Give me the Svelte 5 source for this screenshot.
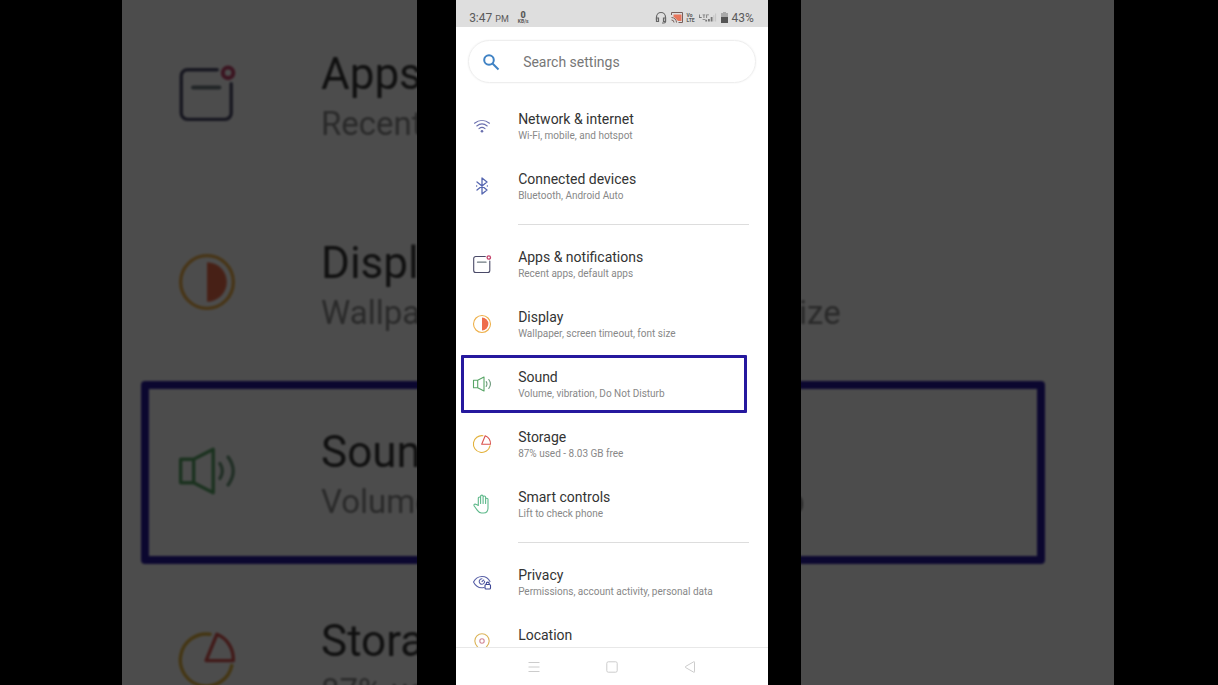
<script>
	const settings = [
		{ id: "network", title: "Network & internet", text: "Wi-Fi, mobile, and hotspot" },
		{ id: "devices", title: "Connected devices", text: "Bluetooth, Android Auto", last: true },
		{ id: "apps", title: "Apps & notifications", text: "Recent apps, default apps" },
		{ id: "display", title: "Display", text: "Wallpaper, screen timeout, font size" },
		{ id: "sound", title: "Sound", text: "Volume, vibration, Do Not Disturb", marked: true },
		{ id: "storage", title: "Storage", text: "87% used - 8.03 GB free" },
		{ id: "smart", title: "Smart controls", text: "Lift to check phone", last: true },
		{ id: "privacy", title: "Privacy", text: "Permissions, account activity, personal data" },
		{ id: "location", title: "Location", text: "On - 9 apps have access to location" },
	];

	// only the middle of the list fits behind the phone
	const enlarged = settings.slice(2, 6);

	let search = $state("");
</script>

{#snippet icon(id)}
	<svg class="icon" viewBox="0 0 20 20" fill="none" stroke-width="1.1" stroke-linecap="round" stroke-linejoin="round">
		{#if id === "network"}
			<g stroke="#6a6fae">
				<path d="M2.5 7.2c4.6-3.7 10.4-3.7 15 0" />
				<path d="M4.8 10c3.2-2.6 7.2-2.6 10.4 0" />
				<path d="M7 12.6c1.9-1.5 4.1-1.5 6 0" />
			</g>
			<circle cx="10" cy="15.2" r="1.3" fill="#6a6fae" />
		{:else if id === "devices"}
			<path stroke="#5566b0" stroke-width="1.3" d="M5 6l10 8-5 4V2l5 4-10 8" />
			<path stroke="#5566b0" stroke-width="1.3" d="M4.6 10h.1M15.3 10h.1" />
		{:else if id === "apps"}
			<path stroke="#4a4a68" d="M13.3 2.5H3.7A2 2 0 0 0 1.7 4.500v12a2 2 0 0 0 2 2h12.1a2 2 0 0 0 2-2V7" />
			<path stroke="#6d7a80" stroke-width="1.3" d="M5.5 8.2h8.5" />
			<circle cx="16.8" cy="3.5" r="1.7" stroke="#c4436b" stroke-width="1.3" />
		{:else if id === "display"}
			<circle cx="10" cy="10" r="8.5" stroke="#eeb04a" />
			<path fill="#ee6c4a" d="M10 3.6a6.400 6.400 0 0 1 0 12.8z" />
		{:else if id === "sound"}
			<path stroke="#58a566" d="M1.5 6.2h4.200v7.600H1.500zM5.700 6.200L12 3v14l-6.300-3.200" />
			<path stroke="#6d9a7c" d="M14.2 7.6c1 1.6 1 3.200 0 4.800M16.800 5.500c2.200 3 2.200 6 0 9" />
		{:else if id === "storage"}
			<path stroke="#e3b23c" d="M11 1.7A8.4 8.4 0 1 0 18 11.8" />
			<path stroke="#d9534f" d="M9.7 10.2l3.5-8.5c3.4 1.4 5.400 4.600 5.300 8.500z" />
		{:else if id === "smart"}
			<path
				stroke="#5fb98b"
				d="M6.3 11.5V4.3c0-1.7 2.300-1.700 2.300 0V2.500c0-1.800 2.500-1.800 2.500 0v.8c0-1.700 2.500-1.700 2.500 0v2c0-1.500 2.400-1.500 2.400 0V14c0 3-1.500 5-4.500 5H9.500c-2 0-3-1-4.100-2.600L2.200 12c-.8-1.500.9-2.500 2.200-1.400zM8.600 4v5.500M11.100 3v6.500M13.600 5v4.500"
			/>
		{:else if id === "privacy"}
			<path stroke="#5a62a8" d="M12 15.5C7.5 16.5 3.5 14 1.5 10 5.5 2.8 14.5 2.8 18 9.5" />
			<path stroke="#5a62a8" d="M12.6 9.2a2.7 2.7 0 1 1-2.6-2.4M10 9.5l1.8-1.5" />
			<rect x="13" y="12.5" width="5.5" height="4.5" rx="1" stroke="#3d4795" />
			<path stroke="#3d4795" d="M14.3 12.5v-1c0-1.9 2.9-1.9 2.9 0v1" />
		{:else}
			<path stroke="#dcb45a" d="M10 19.5C5.500 15.500 2.800 12.500 2.800 9a7.200 7.200 0 0 1 14.400 0c0 3.500-2.700 6.500-7.200 10.500z" />
			<circle cx="10" cy="9" r="2.2" stroke="#d08797" />
		{/if}
	</svg>
{/snippet}

{#snippet entry(item)}
	{@render icon(item.id)}
	<span class="label">
		<span class="title">{item.title}</span>
		<span class="text">{item.text}</span>
	</span>
{/snippet}

<div class="stage">
	<div class="backdrop" aria-hidden="true">
		<div class="enlarged">
			{#each enlarged as item}
				<div class="row" class:marked={item.marked}>{@render entry(item)}</div>
			{/each}
		</div>
	</div>

	<div class="band">
		<main class="phone">
			<header>
				<span class="time">3:47 <small>PM</small></span>
				<span class="speed"><b>0</b><span>KB/s</span></span>
				<span class="signals">
					<svg width="12" height="13" viewBox="0 0 12 13" fill="none" stroke="#666">
						<path stroke-width="1.2" d="M1.5 9V6a4.5 4.5 0 0 1 9 0v4.5q0 1.5-1.5 1.5H7" />
						<path stroke-width="1.2" d="M1.5 7H3.5v3.5h-2zM8.5 7h2v3.5h-2z" />
					</svg>
					<svg width="12" height="11" viewBox="0 0 12 11">
						<path fill="#e8765c" d="M2.5 2.5h8v6.5H7L2.5 4.5z" />
						<path fill="none" stroke="#77605c" d="M.5 3V.5h11v10H7.5M.5 5.5a5 5 0 0 1 5 5M.5 8a2.5 2.5 0 0 1 2.5 2.5" />
					</svg>
					<span class="tiny"><span>Vo</span><span>LTE</span></span>
					<svg width="18" height="10" viewBox="0 0 20 10" fill="#777">
						<path d="M0 1h1v3h2v1H0zM4 1h3v1H6v3H5V2H4zM8 1h3v1H9v3H8zM4 6h3v1H4zM7 7h2v2H7zM10 6h2v3h-2zM13 4h2v5h-2z" />
						<path fill="#c2c2c2" d="M16 2h1v7h-1zM18 0h1v9h-1z" />
					</svg>
					<svg width="7" height="11" viewBox="0 0 7 11">
						<path fill="#aaa" d="M2 0h3v1h2v5H0V1h2z" />
						<path fill="#555" d="M0 5h7v6H0z" />
					</svg>
					<span class="percent">43%</span>
				</span>
			</header>

			<label class="search">
				<svg width="18" height="18" viewBox="0 0 18 18" fill="none" stroke="#3f82c4" stroke-width="2">
					<circle cx="7" cy="7" r="4.8" />
					<path d="M10.5 10.5l6 6" />
				</svg>
				<input type="text" placeholder="Search settings" aria-label="Search settings" bind:value={search} />
			</label>

			<nav class="list">
				{#each settings as item}
					<a class="row" class:marked={item.marked} href="#{item.id}">{@render entry(item)}</a>
					{#if item.last}
						<hr />
					{/if}
				{/each}
			</nav>

			<footer>
				<button aria-label="Recent apps">
					<svg width="12" height="12" viewBox="0 0 12 12"><path d="M.5 1.5h11M.5 6h11M.5 10.5h11" /></svg>
				</button>
				<button aria-label="Home">
					<svg width="12" height="12" viewBox="0 0 12 12"><rect x=".8" y=".8" width="10.4" height="10.4" rx="1.5" /></svg>
				</button>
				<button aria-label="Back">
					<svg width="12" height="12" viewBox="0 0 12 12"><path d="M10.5 1.2v9.6q0 .8-.8.4L1.5 6.5q-.8-.5 0-1L9.7.8q.8-.4.8.4z" /></svg>
				</button>
			</footer>
		</main>
	</div>
</div>

<style>
	:global(body) {
		margin: 0;
		background: #000;
	}

	.stage {
		display: grid;
		grid-template: 100vh / 100%;
		overflow: hidden;
		font-family: Roboto, "Liberation Sans", sans-serif;
	}

	.backdrop,
	.band {
		grid-area: 1 / 1;
		display: grid;
		min-height: 0;
	}

	.backdrop {
		grid-template: 100% / 122fr 992fr 104fr;
	}

	.enlarged {
		grid-column: 2;
		box-sizing: border-box;
		padding-top: 3px;
		overflow: hidden;
		background: #fff;
		filter: brightness(0.3);
	}

	.band {
		z-index: 1;
		width: 31.5%;
		justify-self: center;
		grid-template: 100% / 39fr 312fr 33fr;
		background: #000;
	}

	.phone {
		grid-column: 2;
		display: flex;
		flex-direction: column;
		min-width: 0;
		background: #fff;
	}

	header {
		display: flex;
		align-items: center;
		box-sizing: border-box;
		height: 27px;
		padding: 8px 14px 0 13px;
		background: #dedede;
		color: #5a5a5a;
		font-size: 12px;
	}

	small {
		font-size: 9px;
	}

	.speed {
		display: flex;
		flex-direction: column;
		align-items: center;
		margin-left: 9px;
		font-size: 5px;
		line-height: 5px;
		font-weight: bold;
	}

	.speed b {
		font-size: 9px;
		line-height: 8px;
	}

	.signals {
		display: flex;
		align-items: center;
		gap: 4px;
		margin-left: auto;
	}

	.tiny {
		display: flex;
		flex-direction: column;
		font-size: 5px;
		line-height: 5px;
		font-weight: bold;
	}

	.search {
		display: flex;
		align-items: center;
		gap: 23px;
		margin: 13px 12px 14px 12px;
		padding: 0 13px;
		height: 41px;
		border: 1px solid #eee;
		border-radius: 22px;
		box-shadow: 0 0 2px #eee;
	}

	input {
		flex: 1;
		min-width: 0;
		padding: 0;
		border: 0;
		outline: 0;
		background: none;
		color: #333;
		font: inherit;
		font-size: 14px;
	}

	input::placeholder {
		color: #777;
		opacity: 1;
	}

	.list {
		flex: 1;
		min-height: 0;
		overflow: hidden;
	}

	.row {
		position: relative;
		display: flex;
		align-items: center;
		height: 60px;
		padding-left: 16px;
		color: #333;
		text-decoration: none;
		white-space: nowrap;
	}

	.icon {
		flex: none;
		width: 20px;
		height: 20px;
		margin: 0 26px 2px 0;
	}

	.label {
		display: flex;
		flex-direction: column;
	}

	.title {
		font-size: 14px;
		line-height: 17px;
	}

	.text {
		color: #888;
		font-size: 10px;
		line-height: 15px;
	}

	.marked::after {
		content: "";
		position: absolute;
		inset: 0 21px 2px 5px;
		border: 3px solid #26189e;
		border-radius: 1px;
	}

	hr {
		height: 1px;
		margin: 7px 19px 10px 62px;
		border: 0;
		background: #ddd;
	}

	footer {
		display: flex;
		justify-content: space-evenly;
		align-items: center;
		height: 37px;
		padding: 0 5px;
		border-top: 1px solid #e8e8e8;
	}

	button {
		display: flex;
		padding: 0;
		border: 0;
		background: none;
	}

	button svg {
		fill: none;
		stroke: #ccc;
	}

	.enlarged .row {
		height: 189px;
		padding-left: 54px;
		filter: blur(1px);
	}

	.enlarged .icon {
		width: 62px;
		height: 62px;
		margin: 0 83px 10px 0;
	}

	.enlarged .title {
		font-size: 44px;
		line-height: 52px;
	}

	.enlarged .text {
		font-size: 33px;
		line-height: 48px;
	}

	.enlarged .marked::after {
		inset: 0 69px 6px 19px;
		border-width: 8px;
		border-radius: 4px;
	}
</style>
